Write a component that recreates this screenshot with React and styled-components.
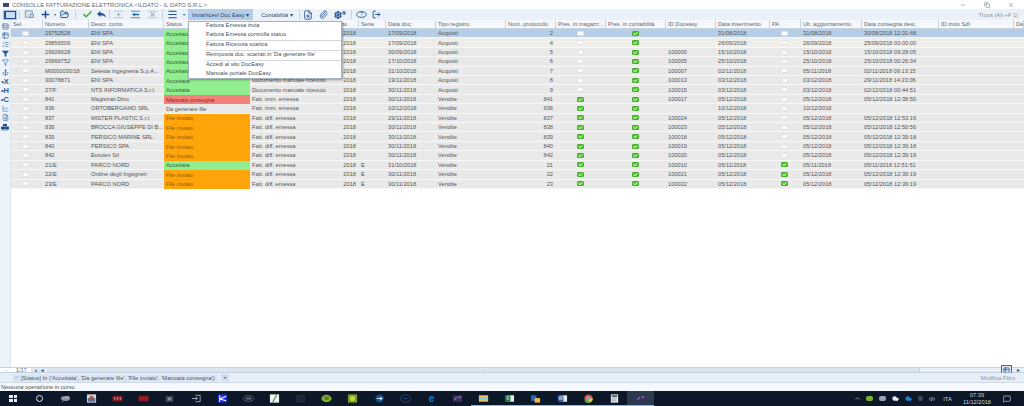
import React from "react";
import styled, { createGlobalStyle } from "styled-components";
import { Plus, FolderOpen, Check, Menu, Paperclip, Settings, LogOut, FileSearch, Filter, Anchor, LineChart, Rows3, ChevronUp, Volume2, Cloud, MessageSquare, Minus, X, Copy, ListChecks, Table2 } from "lucide-react";

const COLUMNS = "32px 46px 75px 86px 82px 27px 27px 50px 70px 50px 50px 60px 50px 54px 31px 61px 77px 75px 10px";

const rows = [
	["29752528", "ENI SPA", "ok", "", "", "17/09/2018", "Acquisti", "2", 0, "", "31/08/2018", 0, "31/08/2018", "30/08/2018 12:31:48"],
	["29856506", "ENI SPA", "ok", "", "", "17/09/2018", "Acquisti", "4", 0, "", "26/09/2018", 0, "26/09/2018", "25/09/2018 00:00:00"],
	["29926628", "ENI SPA", "ok", "", "", "30/09/2018", "Acquisti", "5", 0, "100000", "15/10/2018", 0, "15/10/2018", "15/10/2018 09:28:05"],
	["29968752", "ENI SPA", "ok", "", "", "17/10/2018", "Acquisti", "6", 0, "100005", "25/10/2018", 0, "25/10/2018", "25/10/2018 00:26:34"],
	["M0000030/18", "Selesta Ingegneria S.p.A...", "ok", "", "", "31/10/2018", "Acquisti", "7", 0, "100007", "02/11/2018", 0, "05/11/2018", "02/11/2018 09:13:15"],
	["30078871", "ENI SPA", "ok", "Documento manuale ricevuto", "", "19/11/2018", "Acquisti", "8", 0, "100013", "03/12/2018", 0, "03/12/2018", "29/11/2018 14:23:06"],
	["27/F", "NTS INFORMATICA S.r.l.", "ok", "Documento manuale ricevuto", "", "30/11/2018", "Acquisti", "9", 0, "100015", "03/12/2018", 0, "03/12/2018", "02/12/2018 00:44:51"],
	["841", "Magistrati Dino", "fail", "Fatt. imm. emessa", "", "30/11/2018", "Vendite", "841", 1, "100017", "05/12/2018", 0, "05/12/2018", "05/12/2018 12:38:50"],
	["936", "ORTOBERGAMO SRL", "todo", "Fatt. imm. emessa", "", "10/12/2018", "Vendite", "936", 1, "", "10/12/2018", 0, "10/12/2018", ""],
	["837", "MISTER PLASTIC S.r.l.", "sent", "Fatt. diff. emessa", "", "29/11/2018", "Vendite", "837", 1, "100024", "05/12/2018", 0, "05/12/2018", "05/12/2018 12:53:16"],
	["838", "BROCCA GIUSEPPE DI B...", "sent", "Fatt. diff. emessa", "", "30/11/2018", "Vendite", "838", 1, "100023", "05/12/2018", 0, "05/12/2018", "05/12/2018 12:50:56"],
	["839", "PERSICO MARINE SRL", "sent", "Fatt. diff. emessa", "", "30/11/2018", "Vendite", "839", 1, "100018", "05/12/2018", 0, "05/12/2018", "05/12/2018 12:39:18"],
	["840", "PERSICO SPA", "sent", "Fatt. diff. emessa", "", "30/11/2018", "Vendite", "840", 1, "100019", "05/12/2018", 0, "05/12/2018", "05/12/2018 12:39:18"],
	["842", "Eurotex Srl", "sent", "Fatt. diff. emessa", "", "30/11/2018", "Vendite", "842", 1, "100020", "05/12/2018", 0, "05/12/2018", "05/12/2018 12:39:19"],
	["21/E", "PARCO NORD", "ok", "Fatt. diff. emessa", "E", "31/10/2018", "Vendite", "21", 1, "100010", "05/11/2018", 1, "05/11/2018", "05/11/2018 12:51:51"],
	["22/E", "Ordine degli Ingegneri", "sent", "Fatt. diff. emessa", "E", "30/11/2018", "Vendite", "22", 1, "100021", "05/12/2018", 1, "05/12/2018", "05/12/2018 12:39:19"],
	["23/E", "PARCO NORD", "sent", "Fatt. diff. emessa", "E", "30/11/2018", "Vendite", "23", 1, "100022", "05/12/2018", 1, "05/12/2018", "05/12/2018 12:39:19"],
];

const headers = ["Sel.", "Numero", "Descr. conto", "Status", "", "Anno", "Serie", "Data doc.", "Tipo registro", "Num. protocollo", "Pres. in magazz...", "Pres. in contabilità", "ID Doceasy", "Data inserimento", "PA", "Ult. aggiornamento", "Data consegna dest.", "ID invio SdI", "Da"];

const statusLabel = { ok: "Accettata", fail: "Mancata consegna", todo: "Da generare file", sent: "File inviato" };
const statusBg = { ok: "#90ee90", fail: "#f4807a", todo: "transparent", sent: "#ffa50a" };
const statusFg = { ok: "#35603a", fail: "#8a2a26", todo: "#555", sent: "#8a5a08" };

const menuGroups = [
	["Fattura Emessa invia", "Fattura Emessa controlla status"],
	["Fattura Ricevuta scarica"],
	["Reimposta doc. scartati in 'Da generare file'"],
	["Accedi al sito DocEasy", "Manuale portale DocEasy"],
];

const GlobalStyle = createGlobalStyle`
	html, body {
		margin: 0;
		background: #fff;
	}
	body {
		font-family: "Liberation Sans", Arial, sans-serif;
		font-size: 5.7px;
		color: #555;
	}
`;

const Page = styled.div`
	position: relative;
	width: 1024px;
	height: 406px;
	overflow: hidden;
	display: flex;
	flex-direction: column;
`;

const TitleBar = styled.div`
	height: 9px;
	flex: none;
	display: flex;
	align-items: center;
	padding: 0 10px 0 3px;
	background: #fff;
	color: #5f6b78;
	font-size: 5.9px;
`;

const AppMark = styled.span`
	width: 6px;
	height: 4px;
	margin-right: 3px;
	background: #3a4a78;
`;

const WindowButtons = styled.div`
	margin-left: auto;
	display: flex;
	gap: 18px;
	color: #66707c;
`;

const ToolBar = styled.div`
	height: 11px;
	flex: none;
	display: flex;
	align-items: center;
	padding-left: 3px;
	background: #eaf1f8;
`;

const Active = styled.span`
	width: 14px;
	height: 10px;
	flex: none;
	display: flex;
	align-items: center;
	justify-content: center;
	background: #a9c6e6;
	&::after {
		content: "";
		width: 9px;
		height: 6px;
		background: #c9dcf0;
		border: 1px solid #1f4f8c;
		border-left-width: 2px;
	}
`;

const Tool = styled.span`
	width: ${(p) => p.$w || 14}px;
	flex: none;
	display: flex;
	align-items: center;
	justify-content: center;
	color: ${(p) => p.$color || "#1f4f8c"};
`;

const Sep = styled.span`
	width: ${(p) => p.$w || 5}px;
	height: 9px;
	flex: none;
	display: flex;
	justify-content: center;
	&::after {
		content: "";
		width: 1px;
		background: #c6d3e2;
	}
`;

const Caret = styled.span`
	width: ${(p) => p.$w || 4}px;
	flex: none;
	text-align: center;
	color: #1f4f8c;
	font-size: 4px;
`;

const MenuButton = styled.span`
	height: 11px;
	width: ${(p) => p.$w}px;
	flex: none;
	display: flex;
	align-items: center;
	justify-content: center;
	color: #33475f;
	background: ${(p) => (p.$open ? "#b4cde8" : "transparent")};
	margin-left: ${(p) => p.$ml || 0}px;
`;

const FindText = styled.span`
	margin-left: auto;
	padding-right: 6px;
	color: #8a949f;
`;

const Main = styled.div`
	flex: 1;
	display: flex;
	min-height: 0;
`;

const SideBar = styled.div`
	width: 11px;
	flex: none;
	display: flex;
	flex-direction: column;
	align-items: center;
	padding-top: 1.5px;
	background: #eef3f9;
	border-right: 1px solid #dde5ee;
	box-sizing: border-box;
`;

const SideItem = styled.span`
	height: 9.2px;
	flex: none;
	display: flex;
	align-items: center;
	justify-content: center;
	color: ${(p) => p.$color || "#2a5a96"};
	font-size: 7.5px;
	font-weight: bold;
`;

const Grid = styled.div`
	flex: 1;
	min-width: 0;
`;

const HeaderRow = styled.div`
	display: grid;
	grid-template-columns: ${COLUMNS};
	height: 9px;
	box-sizing: border-box;
	background: #f4f7fb;
	border-bottom: 1px solid #c9d3df;
`;

const HeaderCell = styled.div`
	padding-left: 2px;
	line-height: 8px;
	white-space: nowrap;
	overflow: hidden;
	border-right: 1px solid #c9d3df;
	color: #5f6873;
`;

const Row = styled.div`
	display: grid;
	grid-template-columns: ${COLUMNS};
	height: 9.41px;
	box-sizing: border-box;
	border-bottom: 1px solid #f7f7f7;
	background: ${(p) => (p.$selected ? "#b6cde6" : p.$warm ? "#efeeea" : "#e9e9e9")};
`;

const Cell = styled.div`
	display: flex;
	align-items: center;
	justify-content: ${(p) => (p.$right ? "flex-end" : p.$center ? "center" : "flex-start")};
	padding: ${(p) => (p.$right ? "0 3px 0 0" : p.$center ? "0 2px 0 0" : "0 0 0 2px")};
	white-space: nowrap;
	overflow: hidden;
	min-width: 0;
`;

const SelCell = styled(Cell)`
	padding-right: 4px;
`;

const StatusCell = styled(Cell)`
	background: ${(p) => statusBg[p.$status]};
	color: ${(p) => statusFg[p.$status]};
	margin-bottom: -1px;
`;

const Box = styled.span`
	width: 7px;
	height: 5px;
	flex: none;
	display: flex;
	align-items: center;
	justify-content: center;
	border-radius: 1px;
	box-sizing: border-box;
	background: ${(p) => (p.$on ? "#4fc22e" : "#fbfbfb")};
	border: 1px solid ${(p) => (p.$on ? "#46b028" : "#e2e2e2")};
	color: #fff;
`;

const DropMenu = styled.div`
	position: absolute;
	left: 188px;
	top: 21px;
	width: 154px;
	height: 58px;
	box-sizing: border-box;
	background: #fff;
	border: 1px solid #a8b2bd;
	box-shadow: 1px 1px 2px rgba(0, 0, 0, 0.35);
	padding-left: 17px;
	color: #44505c;
	font-size: 5.7px;
`;

const MenuGroup = styled.div`
	height: ${(p) => p.$h}px;
	box-sizing: border-box;
	border-bottom: 1px solid ${(p) => (p.$last ? "transparent" : "#d4d9df")};
`;

const MenuItem = styled.div`
	height: 9.2px;
	line-height: 6.5px;
	white-space: nowrap;
`;

const PagerBar = styled.div`
	height: 6px;
	flex: none;
	display: flex;
	align-items: center;
	box-sizing: border-box;
	background: #dfe8f2;
	border-top: 1px solid #c5d2e0;
	border-bottom: 1px solid #c5d2e0;
	color: #5f6b78;
`;

const PagerCount = styled.span`
	background: #fff;
	height: 100%;
	display: flex;
	align-items: center;
	gap: 7px;
	padding-left: 3px;
	width: 31px;
	box-sizing: border-box;
	flex: none;
`;

const PagerNav = styled.span`
	width: 17px;
	flex: none;
	display: flex;
	justify-content: center;
	gap: 4px;
	color: #1f4f8c;
	font-size: 4.5px;
	font-weight: bold;
`;

const ScrollTrack = styled.span`
	flex: 1;
	align-self: stretch;
	display: flex;
	justify-content: center;
	align-items: center;
	color: #a8b4c2;
	font-size: 4px;
	background: #dbe5f0;
	border-right: 1px solid #c5d2e0;
`;

const ScrollEnd = styled.span`
	width: 104px;
	flex: none;
	display: flex;
	align-items: center;
	justify-content: flex-end;
	gap: 5px;
	padding-right: 4px;
	box-sizing: border-box;
	color: #1f4f8c;
	background: #e9eff6;
	align-self: stretch;
`;

const ColumnsButton = styled.span`
	width: 11px;
	height: 10px;
	flex: none;
	margin: -2px 0;
	display: flex;
	align-items: center;
	justify-content: center;
	box-sizing: border-box;
	background: #d5e3f2;
	border: 1px solid #3c6fa8;
	align-self: center;
`;

const FilterBar = styled.div`
	height: 10px;
	flex: none;
	box-sizing: border-box;
	display: flex;
	align-items: center;
	padding: 0 9px 0 12px;
	background: #e6eef7;
	border-bottom: 1px solid #d0dae5;
	color: #4a5663;
	font-size: 5.85px;
`;

const FilterTag = styled.span`
	display: flex;
	align-items: center;
	gap: 2px;
	height: 8px;
	padding: 0 3px 0 2px;
	background: #dce7f3;
`;

const FilterDrop = styled.span`
	width: 8px;
	height: 7px;
	margin-left: 3px;
	display: flex;
	align-items: center;
	justify-content: center;
	background: #cfdeee;
	color: #1f4f8c;
	font-size: 4px;
`;

const FilterEdit = styled.span`
	margin-left: auto;
	font-size: 5.5px;
	color: #8a949f;
`;

const StatusBar = styled.div`
	height: 8px;
	flex: none;
	display: flex;
	align-items: center;
	padding-left: 1px;
	background: #f5f8fc;
	color: #4a5663;
`;

const TaskBar = styled.div`
	height: 15px;
	flex: none;
	display: flex;
	align-items: center;
	padding-right: 6px;
	background: #0c1828;
	color: #cdd6e0;
`;

const TaskSlot = styled.span`
	width: 26.15px;
	height: 100%;
	flex: none;
	box-sizing: border-box;
	display: flex;
	align-items: center;
	justify-content: center;
	background: ${(p) => (p.$active ? "#2b3a4d" : "transparent")};
	border-bottom: 1px solid ${(p) => (p.$running ? "#8fb6da" : "transparent")};
	background-clip: padding-box;
`;

const WinLogo = styled.span`
	width: 8px;
	height: 7px;
	background:
		linear-gradient(#0c1828, #0c1828) center / 100% 1px no-repeat,
		linear-gradient(#0c1828, #0c1828) center / 1px 100% no-repeat,
		#e8eef5;
`;

const Cortana = styled.span`
	width: 7px;
	height: 7px;
	box-sizing: border-box;
	border: 1px solid #dfe6ee;
	border-radius: 50%;
`;

const Tray = styled.div`
	margin-left: auto;
	display: flex;
	align-items: center;
`;

const TraySlot = styled.span`
	width: ${(p) => p.$w || 12}px;
	flex: none;
	display: flex;
	align-items: center;
	justify-content: center;
`;

const TrayDot = styled.span`
	width: ${(p) => p.$w || 7}px;
	height: 5px;
	border-radius: 2px;
	background: ${(p) => p.$c};
`;

const Clock = styled.span`
	text-align: center;
	line-height: 6.5px;
	color: #c7d0da;
`;

const MiniCheck = () => (
	<svg width="5" height="3" viewBox="0 0 5 3">
		<path d="M0.5 1.5 L2 2.6 L4.5 0.4" fill="none" stroke="#fff" strokeWidth="0.9" />
	</svg>
);

const Tick = ({ on }) => <Box $on={on}>{on ? <MiniCheck /> : null}</Box>;

const Ico = ({ w = 11, h = 9, vw = 12, vh = 9, children }) => (
	<svg width={w} height={h} viewBox={`0 0 ${vw} ${vh}`}>
		{children}
	</svg>
);

const BackArrow = () => (
	<Ico>
		<path d="M1 4 L5 0.8 V2.8 C8.5 2.8 10.5 4.5 11 8 C9.6 6 8 5.2 5 5.2 V7.2 Z" fill="#1f4f8c" />
	</Ico>
);

const FadedPlus = () => (
	<Ico>
		<path d="M1 1 H11 M1 8 H11" stroke="#b7c4d2" />
		<path d="M6 2.5 V6.5 M4 4.5 H8" stroke="#9fb0c2" strokeWidth="1.2" />
	</Ico>
);

const LinedBack = () => (
	<Ico>
		<path d="M1 1 H11 M1 8 H11" stroke="#5a84ad" />
		<path d="M2 4.5 L5.5 2.5 V3.8 H10 V5.2 H5.5 V6.5 Z" fill="#1f6fa0" />
	</Ico>
);

const FadedCross = () => (
	<Ico>
		<path d="M1 1 H11 M1 8 H11" stroke="#b7c4d2" />
		<path d="M4 2.5 L8 6.5 M8 2.5 L4 6.5" stroke="#9fb0c2" strokeWidth="1.2" />
	</Ico>
);

const ListDoc = () => (
	<Ico>
		<rect x="1.5" y="0.5" width="7.5" height="7" fill="#dbe5f0" stroke="#7f97b3" />
		<circle cx="8.5" cy="6" r="2" fill="#eaf1f8" stroke="#5c7a9c" />
	</Ico>
);

const SmallGear = styled(Settings)`
	margin-top: -4px;
`;

const Gears = () => (
	<Tool $w={18}>
		<Settings size={8} strokeWidth={3.5} />
		<SmallGear size={4} strokeWidth={4} />
	</Tool>
);

const HelpOval = () => (
	<Ico w={11} h={7} vw={13} vh={8}>
		<ellipse cx="6.5" cy="4" rx="5.5" ry="3.4" fill="none" stroke="#1f4f8c" />
		<text x="6.5" y="6" fontSize="5.5" textAnchor="middle" fill="#1f4f8c" fontFamily="Liberation Sans">?</text>
	</Ico>
);

const PrinterMark = () => (
	<Ico w={8} h={7} vw={8} vh={7}>
		<rect x="2" y="0" width="4" height="2" fill="#1f4f8c" />
		<rect x="0" y="2.5" width="8" height="3" rx="0.5" fill="#1f4f8c" />
		<rect x="2" y="5" width="4" height="2" fill="#dbe5f0" stroke="#1f4f8c" strokeWidth="0.5" />
	</Ico>
);

const sideItems = [
	<Rows3 size={7} />, <Table2 size={7} />, <ListChecks size={7} />,
	<Filter size={7} fill="currentColor" />, <Filter size={7} />, <Anchor size={7} />,
	"•X", "•H", "•C",
	<LineChart size={7} />, <FileSearch size={7} />, <PrinterMark />,
];

// taskbar pictures, left to right as pinned in the screenshot
const taskIcons = [
	<Ico><ellipse cx="6" cy="4.5" rx="5" ry="2.6" fill="#8d93a3" /><path d="M4 4 L10 1.5 L9 4 Z" fill="#d4a7b4" /><path d="M2 8 L5 6" stroke="#7a8090" /></Ico>,
	<Ico><rect x="1" width="10" height="9" fill="#d6d3cf" /><rect x="2" y="4" width="8" height="4" fill="#5b6f9c" /><rect x="4" y="2" width="4" height="3" fill="#9a5a3c" /></Ico>,
	<Ico><rect x="0.5" y="1.5" width="11" height="6" fill="#7e1a20" /><path d="M2.5 4.5 H3.5 M5.5 4.5 H6.5 M8.5 4.5 H9.5" stroke="#e8d3d3" strokeWidth="2" /></Ico>,
	<Ico><rect x="0.5" y="1.5" width="11" height="6" fill="#8b1a20" /><path d="M2.5 4.5 H3.5 M5.5 4.5 H6.5 M8.5 4.5 H9.5" stroke="#b3262c" strokeWidth="2" /></Ico>,
	<Ico><rect x="2" y="2" width="8" height="6" fill="#4a4f57" /><rect x="4.5" y="3.5" width="3" height="3" fill="#8a8f96" /></Ico>,
	<Ico><path d="M5 1 H10 V8 H5 M1 4.5 H7 M5 3 L7 4.5 L5 6" fill="none" stroke="#c5ccd4" strokeWidth="0.8" /></Ico>,
	<Ico><rect x="1" width="10" height="9" fill="#1b2fe0" /><path d="M3 1 L3 8 M3 5 L10 2 M3 5 L10 7" stroke="#fff" strokeWidth="1.1" /></Ico>,
	<Ico><ellipse cx="6" cy="4.5" rx="5.5" ry="3" fill="none" stroke="#5a5f68" /><path d="M3 4.5 H9" stroke="#6f747c" strokeWidth="2" /></Ico>,
	<Ico><rect x="1" width="10" height="9" fill="#f0f3ee" /><path d="M4 8.5 L8.5 0.5" stroke="#4c8b4c" strokeWidth="1.2" /></Ico>,
	<Ico><rect x="2" y="1" width="8" height="7" fill="#1b2530" stroke="#2c3642" /></Ico>,
	<Ico><ellipse cx="6" cy="4.5" rx="5.5" ry="4" fill="#7fb52a" /><text x="6" y="6.5" fontSize="5.5" textAnchor="middle" fill="#1d3a10" fontFamily="Liberation Sans">W</text></Ico>,
	<Ico><rect x="1" width="10" height="9" fill="#7f9c2a" /><circle cx="6" cy="4.5" r="2.8" fill="#c3d64a" /></Ico>,
	<Ico><circle cx="6" cy="4.5" r="4.5" fill="#144a8a" /><path d="M3 4.5 H9 M6.5 2.8 L9 4.5 L6.5 6.2" stroke="#e3edf7" fill="none" /></Ico>,
	<Ico><ellipse cx="6" cy="4.5" rx="5.5" ry="4" fill="none" stroke="#234a80" /><path d="M3.5 4.5 H8.5" stroke="#234a80" /></Ico>,
	<Ico><text x="6" y="8" fontSize="11" textAnchor="middle" fontWeight="bold" fill="#1a78c8" fontFamily="Liberation Sans">e</text></Ico>,
	<Ico><rect x="1" y="1" width="10" height="7" fill="#3b3160" /><path d="M3 6 L5 3 M7 3 H10" stroke="#a59cd0" /></Ico>,
	<Ico><rect x="1" y="1" width="10" height="7" fill="#e8c65a" /><rect x="1" y="3" width="10" height="3" fill="#8fc6e2" /></Ico>,
	<Ico><rect x="3" y="1" width="8" height="7" fill="#dfeee4" /><rect x="1" y="1" width="6" height="7" fill="#1e7145" /><text x="4" y="6.5" fontSize="5" textAnchor="middle" fill="#fff" fontFamily="Liberation Sans">X</text></Ico>,
	<Ico><rect x="1" y="1" width="6" height="6" fill="#1a6fb5" /><rect x="5" y="4" width="6" height="5" fill="#efb24a" /></Ico>,
	<Ico><rect x="3" y="1" width="8" height="7" fill="#e3ebf6" /><rect x="1" y="1" width="6" height="7" fill="#2b579a" /><text x="4" y="6.5" fontSize="5" textAnchor="middle" fill="#fff" fontFamily="Liberation Sans">W</text></Ico>,
	<Ico><circle cx="6" cy="4.5" r="4.5" fill="#d9503f" /><path d="M6 4.5 L1.5 7 A4.5 4.5 0 0 0 7 9 Z" fill="#4da84a" /><path d="M6 4.5 L10.5 4 A4.5 4.5 0 0 1 7 9 Z" fill="#e8c23a" /><circle cx="6" cy="4.5" r="1.8" fill="#4a90d9" stroke="#fff" strokeWidth="0.5" /></Ico>,
	<Ico><rect x="2" width="8" height="9" fill="#e8ecef" /><rect x="3" y="1" width="6" height="2" fill="#50555c" /><path d="M3 5 H9 M3 7 H9" stroke="#50555c" strokeDasharray="1 1" /></Ico>,
	<Ico><rect x="1" y="1" width="10" height="7" fill="#3b3160" /><path d="M3 6 L5 3 M7 3 H10" stroke="#a59cd0" /></Ico>,
];

const isRunning = (i) => i >= 16;

export default function App() {
	return (
		<Page>
			<GlobalStyle />
			<TitleBar>
				<AppMark />
				CONSOLLE FATTURAZIONE ELETTRONICA &lt;ILDATO - IL DATO S.R.L.&gt;
				<WindowButtons>
					<Minus size={6} />
					<Copy size={6} />
					<X size={6} />
				</WindowButtons>
			</TitleBar>
			<ToolBar>
				<Active />
				<Sep />
				<Tool><ListDoc /></Tool>
				<Tool $w={2} />
				<Tool><Plus size={11} strokeWidth={3} /></Tool>
				<Caret $w={5}>▾</Caret>
				<Tool><FolderOpen size={9} strokeWidth={2.5} /></Tool>
				<Sep $w={9} />
				<Tool $color="#3fa82f"><Check size={11} strokeWidth={3} /></Tool>
				<Tool><BackArrow /></Tool>
				<Sep $w={3} />
				<Tool><FadedPlus /></Tool>
				<Tool $w={20}><LinedBack /></Tool>
				<Tool><FadedCross /></Tool>
				<Sep $w={6} />
				<Tool><Menu size={11} strokeWidth={2.5} /></Tool>
				<Caret $w={9}>▾</Caret>
				<MenuButton $open $w={65}>Invia/ricevi Doc Easy ▾</MenuButton>
				<MenuButton $w={40} $ml={4}>Contabilità ▾</MenuButton>
				<Sep $w={4} />
				<Tool><FileSearch size={10} /></Tool>
				<Tool $w={16}><Paperclip size={9} /></Tool>
				<Gears />
				<Sep $w={4} />
				<Tool $w={16}><HelpOval /></Tool>
				<Tool><LogOut size={9} strokeWidth={2.5} /></Tool>
				<FindText>Trova (Alt +F 1)</FindText>
			</ToolBar>
			<Main>
				<SideBar>
					{sideItems.map((item, i) => (
						<SideItem key={i}>{item}</SideItem>
					))}
				</SideBar>
				<Grid>
					<HeaderRow>
						{headers.map((h, i) => (
							<HeaderCell key={i}>{h}</HeaderCell>
						))}
					</HeaderRow>
					{rows.map((r, i) => (
						<Row key={r[0]} $selected={i === 0} $warm={i === 1}>
							<SelCell $center><Tick /></SelCell>
							<Cell>{r[0]}</Cell>
							<Cell>{r[1]}</Cell>
							<StatusCell $status={r[2]}>{statusLabel[r[2]]}</StatusCell>
							<Cell>{r[3]}</Cell>
							<Cell $right>2018</Cell>
							<Cell>{r[4]}</Cell>
							<Cell>{r[5]}</Cell>
							<Cell>{r[6]}</Cell>
							<Cell $right>{r[7]}</Cell>
							<Cell $center><Tick on={r[8] === 1} /></Cell>
							<Cell $center><Tick on /></Cell>
							<Cell>{r[9]}</Cell>
							<Cell>{r[10]}</Cell>
							<Cell $center><Tick on={r[11] === 1} /></Cell>
							<Cell>{r[12]}</Cell>
							<Cell>{r[13]}</Cell>
							<Cell />
							<Cell />
						</Row>
					))}
				</Grid>
			</Main>
			<PagerBar>
				<PagerCount><span>···</span>1/17</PagerCount>
				<PagerNav><span>»</span><span>◂</span></PagerNav>
				<ScrollTrack>:::</ScrollTrack>
				<ScrollEnd>
					<ColumnsButton><Table2 size={7} color="#1f4f8c" /></ColumnsButton>
					<span>▸</span>
				</ScrollEnd>
			</PagerBar>
			<FilterBar>
				<FilterTag>
					<Check size={5} color="#1f4f8c" />
					[Status] In ('Accettata', 'Da generare file', 'File inviato', 'Mancata consegna')
				</FilterTag>
				<FilterDrop>▾</FilterDrop>
				<FilterEdit>Modifica Filtro</FilterEdit>
			</FilterBar>
			<StatusBar>Nessuna operazione in corso</StatusBar>
			<TaskBar>
				<TaskSlot><WinLogo /></TaskSlot>
				<TaskSlot><Cortana /></TaskSlot>
				{taskIcons.map((icon, i) => (
					<TaskSlot key={i} $running={isRunning(i)} $active={i === taskIcons.length - 1}>
						{icon}
					</TaskSlot>
				))}
				<Tray>
					<TraySlot><ChevronUp size={7} /></TraySlot>
					<TraySlot><TrayDot $c="#79b52c" /></TraySlot>
					<TraySlot $w={14}><TrayDot $c="#9aa5b0" /></TraySlot>
					<TraySlot><Cloud size={7} fill="#e8eef5" /></TraySlot>
					<TraySlot $w={14}><Cloud size={7} fill="#1f7fd0" color="#1f7fd0" /></TraySlot>
					<TraySlot $w={11}><TrayDot $c="#3c4654" $w={5} /></TraySlot>
					<TraySlot $w={11}><Volume2 size={6} /></TraySlot>
					<TraySlot $w={21}>ITA</TraySlot>
					<TraySlot $w={38}><Clock>07:39<br />11/12/2018</Clock></TraySlot>
					<TraySlot $w={22}><MessageSquare size={8} /></TraySlot>
				</Tray>
			</TaskBar>
			<DropMenu>
				{menuGroups.map((group, i) => (
					<MenuGroup key={i} $h={group.length > 1 ? 18.5 : 10} $last={i === menuGroups.length - 1}>
						{group.map((item) => (
							<MenuItem key={item}>{item}</MenuItem>
						))}
					</MenuGroup>
				))}
			</DropMenu>
		</Page>
	);
}
